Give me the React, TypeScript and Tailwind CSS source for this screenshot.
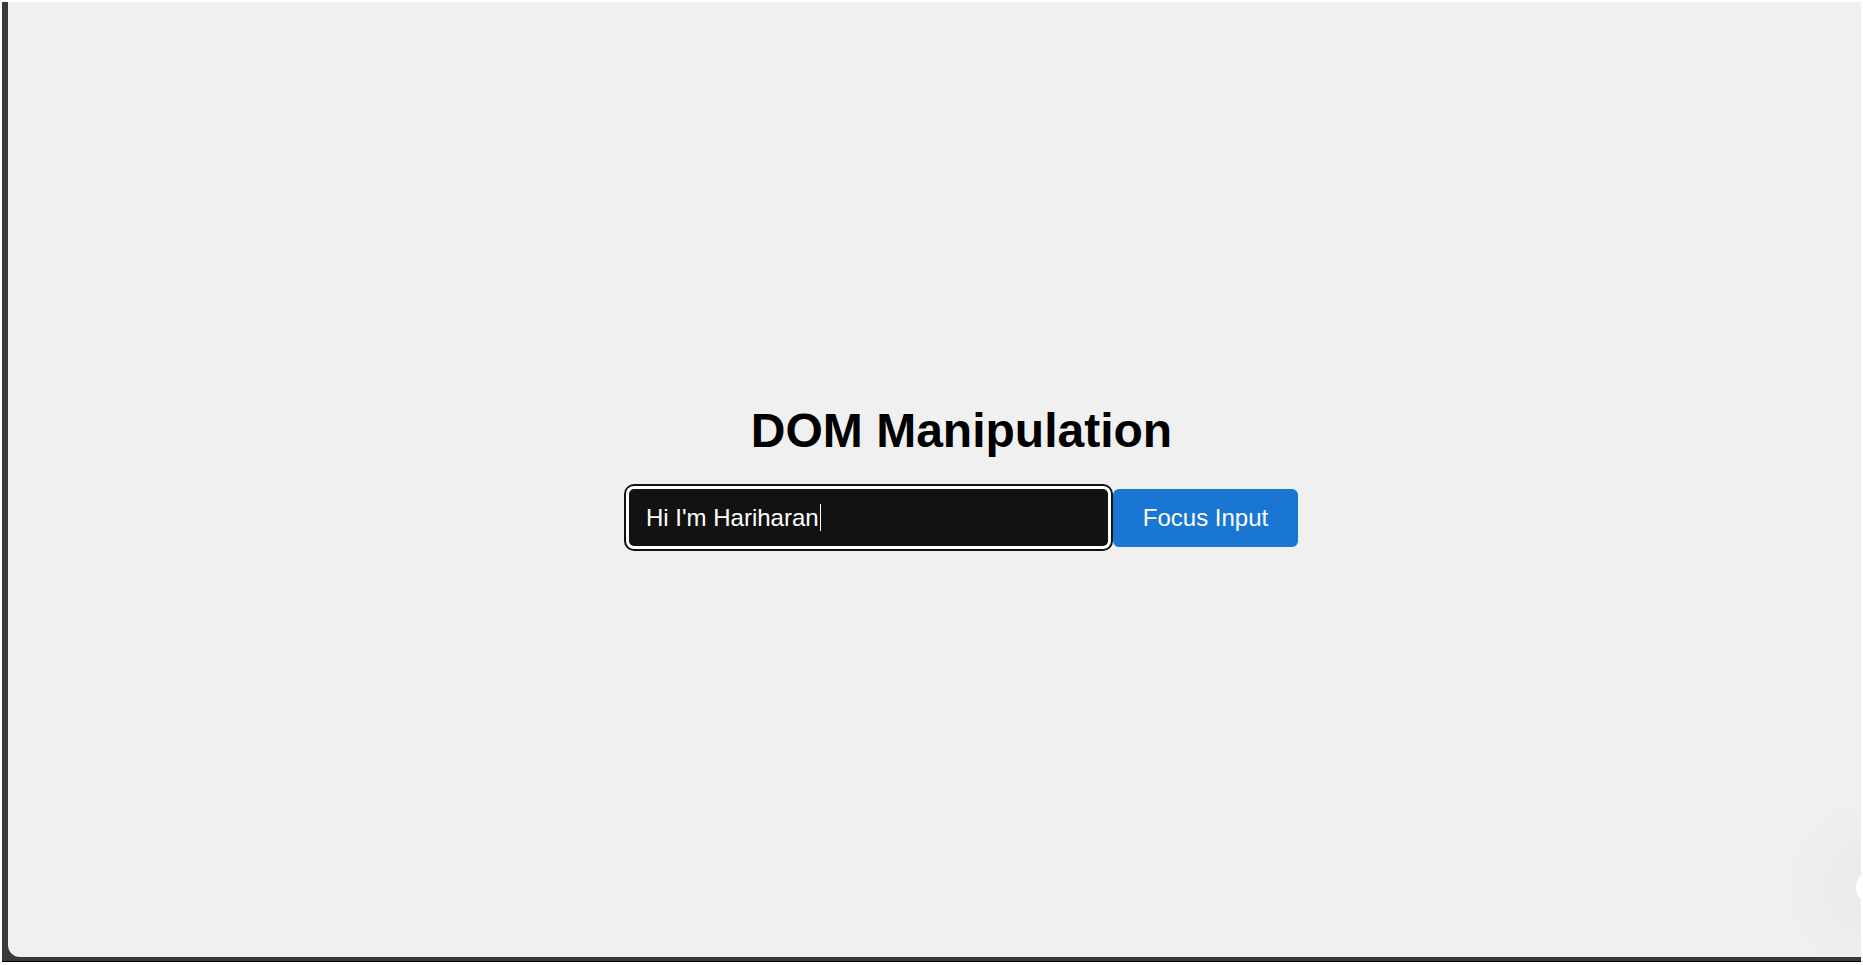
// DOM Manipulation demo screen
export default function App() {
  return (
    <div className="w-[1863px] h-[965px] bg-white pt-[2px] pl-[2px] pr-[2px] pb-[3px] font-['Liberation_Sans',Arial,sans-serif]">
      <div className="h-full bg-[#3a3a3a] border-b border-black pl-[6px] pb-[4px]">
        <div className="relative h-full overflow-hidden bg-[#f0f0f0] rounded-bl-[12px] flex flex-col items-center justify-center pl-[54px] pb-[10px]">
          <h1 className="text-[48px] font-bold leading-[55px] text-black mb-[31px]">DOM Manipulation</h1>
          <div className="flex items-center pl-[4px]">
            <div className="w-[479px] h-[57px] bg-[#121212] rounded-[5px] shadow-[0_0_0_3px_#fff,0_0_0_5px_#121212] flex items-center pl-[17px] text-[24px] text-white">
              <span>Hi I'm Hariharan</span>
              <span className="w-px h-[27px] bg-white ml-px" />
            </div>
            <button className="ml-[5px] w-[185px] h-[58px] bg-[#1976d2] rounded-[6px] text-white text-[24px]">
              Focus Input
            </button>
          </div>
          <div className="absolute right-[-31px] bottom-[52px] w-[36px] h-[36px] rounded-full bg-white shadow-[0_0_70px_35px_rgba(0,0,0,0.035)]" />
        </div>
      </div>
    </div>
  );
}
